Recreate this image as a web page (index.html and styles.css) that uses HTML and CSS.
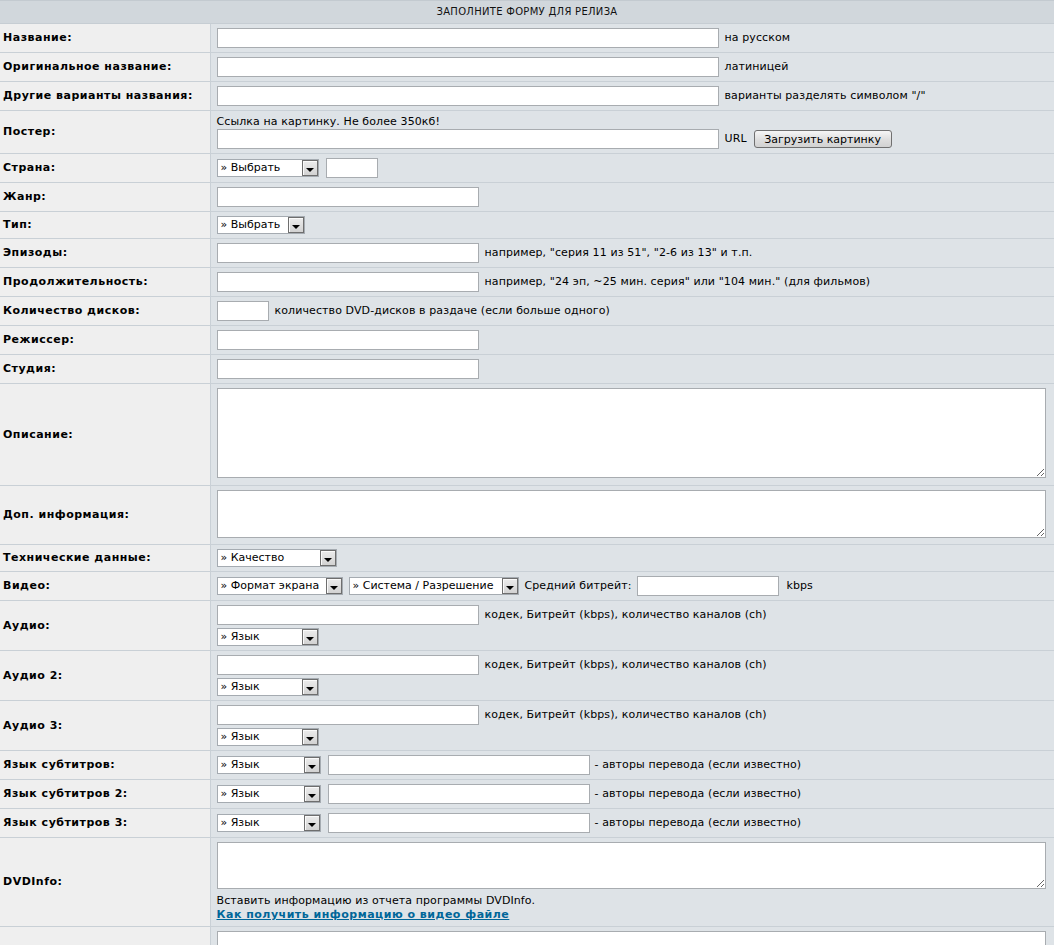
FILE: index.html
```html
<!DOCTYPE html>
<html lang="ru">
<head>
<meta charset="utf-8">
<title>Заполните форму для релиза</title>
<link rel="stylesheet" href="styles.css">
</head>
<body>
<form class="release">
<table class="form">
<tr><th colspan="2" class="head">Заполните форму для релиза</th></tr>

<tr><td class="lbl">Название:</td>
<td class="val"><div class="fld"><input class="w502" type="text"><span>на русском</span></div></td></tr>

<tr><td class="lbl">Оригинальное название:</td>
<td class="val"><div class="fld"><input class="w502" type="text"><span>латиницей</span></div></td></tr>

<tr><td class="lbl">Другие варианты названия:</td>
<td class="val"><div class="fld"><input class="w502" type="text"><span>варианты разделять символом "/"</span></div></td></tr>

<tr><td class="lbl">Постер:</td>
<td class="val"><div class="note">Ссылка на картинку. Не более 350кб!</div>
<div class="fld"><input class="w502" type="text"><span>URL</span><button type="button" class="btn">Загрузить картинку</button></div></td></tr>

<tr><td class="lbl">Страна:</td>
<td class="val"><div class="fld gap7"><span class="sel w102"><select><option>» Выбрать</option></select><span class="arr"></span></span><input class="w52" type="text"></div></td></tr>

<tr><td class="lbl">Жанр:</td>
<td class="val"><div class="fld"><input class="w262" type="text"></div></td></tr>

<tr><td class="lbl">Тип:</td>
<td class="val"><div class="fld"><span class="sel w88"><select><option>» Выбрать</option></select><span class="arr"></span></span></div></td></tr>

<tr><td class="lbl">Эпизоды:</td>
<td class="val"><div class="fld"><input class="w262" type="text"><span>например, "серия 11 из 51", "2-6 из 13" и т.п.</span></div></td></tr>

<tr><td class="lbl">Продолжительность:</td>
<td class="val"><div class="fld"><input class="w262" type="text"><span>например, "24 эп, ~25 мин. серия" или "104 мин." (для фильмов)</span></div></td></tr>

<tr><td class="lbl">Количество дисков:</td>
<td class="val"><div class="fld"><input class="w52" type="text"><span>количество DVD-дисков в раздаче (если больше одного)</span></div></td></tr>

<tr><td class="lbl">Режиссер:</td>
<td class="val"><div class="fld"><input class="w262" type="text"></div></td></tr>

<tr><td class="lbl">Студия:</td>
<td class="val"><div class="fld"><input class="w262" type="text"></div></td></tr>

<tr><td class="lbl">Описание:</td>
<td class="val"><textarea class="ta ta-desc"></textarea></td></tr>

<tr><td class="lbl">Доп. информация:</td>
<td class="val"><textarea class="ta ta-extra"></textarea></td></tr>

<tr><td class="lbl">Технические данные:</td>
<td class="val"><div class="fld"><span class="sel w120"><select><option>» Качество</option></select><span class="arr"></span></span></div></td></tr>

<tr><td class="lbl">Видео:</td>
<td class="val"><div class="fld"><span class="sel w126"><select><option>» Формат экрана</option></select><span class="arr"></span></span><span class="sel w170"><select><option>» Система / Разрешение</option></select><span class="arr"></span></span><span>Средний битрейт:</span><input class="w142" type="text"><span class="kbps">kbps</span></div></td></tr>

<tr><td class="lbl">Аудио:</td>
<td class="val"><div class="fld"><input class="w262" type="text"><span>кодек, Битрейт (kbps), количество каналов (ch)</span></div>
<div class="fld sub"><span class="sel w102"><select><option>» Язык</option></select><span class="arr"></span></span></div></td></tr>

<tr><td class="lbl">Аудио 2:</td>
<td class="val"><div class="fld"><input class="w262" type="text"><span>кодек, Битрейт (kbps), количество каналов (ch)</span></div>
<div class="fld sub"><span class="sel w102"><select><option>» Язык</option></select><span class="arr"></span></span></div></td></tr>

<tr><td class="lbl">Аудио 3:</td>
<td class="val"><div class="fld"><input class="w262" type="text"><span>кодек, Битрейт (kbps), количество каналов (ch)</span></div>
<div class="fld sub"><span class="sel w102"><select><option>» Язык</option></select><span class="arr"></span></span></div></td></tr>

<tr><td class="lbl">Язык субтитров:</td>
<td class="val"><div class="fld gap7"><span class="sel w104"><select><option>» Язык</option></select><span class="arr"></span></span><input class="w262" type="text"><span class="authors">- авторы перевода (если известно)</span></div></td></tr>

<tr><td class="lbl">Язык субтитров 2:</td>
<td class="val"><div class="fld gap7"><span class="sel w104"><select><option>» Язык</option></select><span class="arr"></span></span><input class="w262" type="text"><span class="authors">- авторы перевода (если известно)</span></div></td></tr>

<tr><td class="lbl">Язык субтитров 3:</td>
<td class="val"><div class="fld gap7"><span class="sel w104"><select><option>» Язык</option></select><span class="arr"></span></span><input class="w262" type="text"><span class="authors">- авторы перевода (если известно)</span></div></td></tr>

<tr><td class="lbl">DVDInfo:</td>
<td class="val"><textarea class="ta ta-info"></textarea>
<div class="note">Вставить информацию из отчета программы DVDInfo.</div>
<div class="note"><a class="help" href="#">Как получить информацию о видео файле</a></div></td></tr>

<tr><td class="lbl"></td>
<td class="val"><textarea class="ta ta-desc"></textarea></td></tr>
</table>
</form>
</body>
</html>
```
FILE: styles.css
```css
html, body {
  margin: 0;
  padding: 0;
  background: #dee3e7;
}
body {
  font-family: "DejaVu Sans", Verdana, sans-serif;
  font-size: 11px;
  color: #000;
}
.release { margin: 0; }
.form {
  width: 100%;
  border-collapse: collapse;
  border-spacing: 0;
}
.head {
  background: #d1d7dc;
  border-top: 1px solid #c3cad0;
  border-bottom: 1px solid #c6cdd3;
  height: 22px;
  padding: 0;
  font-size: 10px;
  font-weight: normal;
  letter-spacing: 0.3px;
  text-transform: uppercase;
  text-align: center;
  color: #111;
  line-height: 22px;
}
.lbl {
  width: 210px;
  box-sizing: border-box;
  background: #efefef;
  border-bottom: 1px solid #c9d0d6;
  border-right: 1px solid #c9d0d6;
  padding: 4px 3px;
  font-weight: bold;
  letter-spacing: 0.5px;
  line-height: 14px;
  vertical-align: middle;
  white-space: nowrap;
}
.val {
  background: #dee3e7;
  border-bottom: 1px solid #c9d0d6;
  padding: 4px 8px 4px 6px;
  line-height: 14px;
  letter-spacing: 0.1px;
  vertical-align: top;
}
.fld {
  display: flex;
  align-items: center;
  gap: 6px;
  white-space: nowrap;
}
.fld.gap7 { gap: 7px; }
.fld.sub { margin-top: 3px; }
.authors { margin-left: -2px; }
.note { line-height: 14px; }
input[type="text"] {
  box-sizing: border-box;
  height: 20px;
  border: 1px solid #a8acb0;
  background: #fff;
  margin: 0;
  padding: 1px 3px;
  font: inherit;
}
.w502 { width: 502px; }
.w262 { width: 262px; }
.w52 { width: 52px; }
.w142 { width: 142px; margin-left: 1px; }
.kbps { margin-left: 1px; }
.btn {
  box-sizing: border-box;
  height: 18px;
  width: 138px;
  margin-left: 1px;
  padding: 0;
  border: 1px solid #707070;
  border-radius: 3px;
  background: linear-gradient(#f6f6f6, #dedede 55%, #d2d2d2);
  font: inherit;
  color: #000;
  line-height: 15px;
}
.sel {
  box-sizing: border-box;
  display: inline-flex;
  height: 18px;
  border: 1px solid #a5abb1;
  background: #fff;
}
.sel select {
  appearance: none;
  -webkit-appearance: none;
  flex: 1;
  min-width: 0;
  height: 16px;
  border: 0;
  margin: 0;
  padding: 0 0 0 3px;
  background: transparent;
  font: inherit;
  color: #000;
  line-height: 16px;
  outline: none;
}
.sel .arr {
  box-sizing: border-box;
  width: 16px;
  height: 16px;
  border: 1px solid #6e6e6e;
  background: linear-gradient(#ececec, #d2d2d2);
  box-shadow: inset 1px 1px 0 #fafafa;
  display: flex;
  align-items: center;
  justify-content: center;
}
.sel .arr::before {
  content: "";
  width: 0;
  height: 0;
  margin-top: 3px;
  border-left: 4px solid transparent;
  border-right: 4px solid transparent;
  border-top: 4px solid #000;
}
.w102 { width: 102px; }
.w104 { width: 104px; }
.w88 { width: 88px; }
.w120 { width: 120px; }
.w126 { width: 126px; }
.w170 { width: 170px; }
.ta {
  display: block;
  box-sizing: border-box;
  width: 100%;
  margin: 0;
  border: 1px solid #a8acb0;
  background: #fff;
  font: inherit;
  padding: 2px;
}
.ta-desc { height: 90px; margin-bottom: 3px; }
.ta-extra { height: 48px; margin-bottom: 2px; }
.ta-info { height: 47px; margin-bottom: 5px; }
.help {
  color: #006699;
  font-weight: bold;
  letter-spacing: 0.5px;
  text-decoration: underline;
}
```
